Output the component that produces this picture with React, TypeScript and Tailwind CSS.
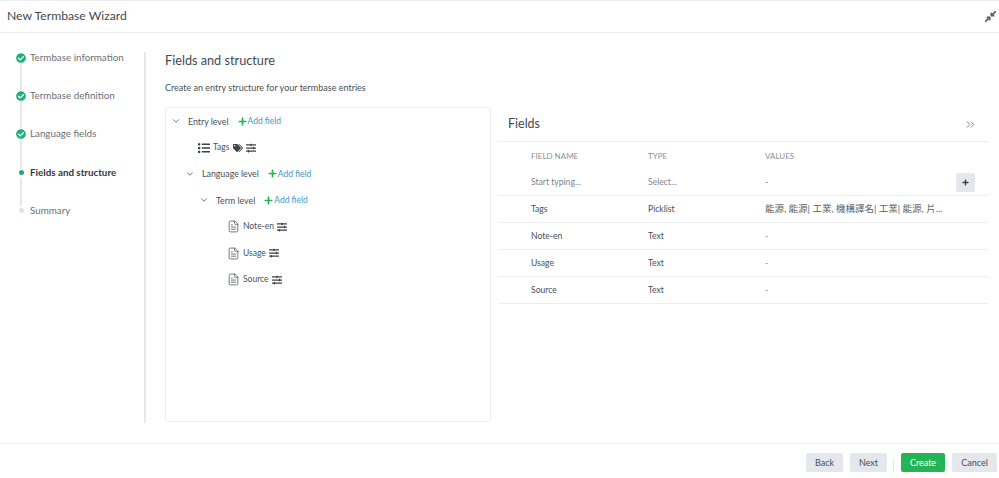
import React from 'react';
import { ChevronDown, ChevronsRight, FileText } from 'lucide-react';
import { FaCheckCircle, FaCompressAlt, FaList, FaPlus, FaSlidersH, FaTags } from 'react-icons/fa';

const steps = [
  { label: 'Termbase information', state: 'done' },
  { label: 'Termbase definition', state: 'done' },
  { label: 'Language fields', state: 'done' },
  { label: 'Fields and structure', state: 'active' },
  { label: 'Summary', state: 'todo' },
];

const rows = [
  { name: 'Tags', type: 'Picklist', values: '能源, 能源| 工業, 機構譯名| 工業| 能源, 片...' },
  { name: 'Note-en', type: 'Text', values: '-' },
  { name: 'Usage', type: 'Text', values: '-' },
  { name: 'Source', type: 'Text', values: '-' },
];

const AddField = () => (
  <span className="flex items-center text-[8.5px] text-[#3f97c4]">
    <FaPlus className="mr-[1px] h-[9px] w-[9px] text-[#22b455]" />
    Add field
  </span>
);

const Level = ({ label, indent }: { label: string; indent: string }) => (
  <div className={`flex h-[26.4px] items-center ${indent}`}>
    <ChevronDown className="h-[10px] w-[10px] text-[#555b63]" />
    <span className="ml-[7px] mr-[9px] text-[8.8px] text-[#4a4f55]">{label}</span>
    <AddField />
  </div>
);

const Leaf = ({ label }: { label: string }) => (
  <div className="flex h-[26.4px] items-center pl-[61px]">
    <FileText className="h-[13px] w-[13px] text-[#555b63]" strokeWidth={1.5} />
    <span className="ml-[3px] mr-[3px] text-[8.5px] text-[#4a4f55]">{label}</span>
    <FaSlidersH className="h-[10px] w-[10px] text-[#3c4248]" />
  </div>
);

export default function App() {
  return (
    <div className="flex h-[478px] w-[999px] flex-col overflow-hidden bg-white font-['Lato','Noto_Sans_CJK_TC',sans-serif]">
      <header className="flex h-[33px] shrink-0 items-center justify-between border-b border-t border-[#eceef0] pl-[7px] pr-[2px]">
        <h1 className="text-[12.2px] text-[#44494f]">New Termbase Wizard</h1>
        <FaCompressAlt className="h-[13px] w-[13px] text-[#5a6068]" />
      </header>

      <div className="flex min-h-0 flex-1 pt-[19px]">
        <aside className="h-[371px] w-[146px] shrink-0 border-r-2 border-[#e6e8ea] pt-[1px]">
          {steps.map((step, i) => (
            <div key={step.label} className="flex h-[38.2px] pl-[16px]">
              <div className="flex w-[10px] flex-col items-center">
                <div className="flex h-[10px] w-[10px] shrink-0 items-center justify-center">
                  {step.state === 'done' && <FaCheckCircle className="h-[10px] w-[10px] text-[#22b07a]" />}
                  {step.state === 'active' && <span className="h-[5px] w-[5px] rounded-full bg-[#1fa97a]" />}
                  {step.state === 'todo' && <span className="h-[5px] w-[5px] rounded-full bg-[#dfe2e5]" />}
                </div>
                {i < steps.length - 1 && <div className="w-[2px] flex-1 bg-[#e6e8ea]" />}
              </div>
              <span
                className={
                  step.state === 'active'
                    ? 'ml-[4px] text-[9.8px] leading-[9px] font-bold text-[#33383d]'
                    : 'ml-[4px] text-[9.8px] leading-[9px] text-[#6a7076]'
                }
              >
                {step.label}
              </span>
            </div>
          ))}
        </aside>

        <main className="min-w-0 flex-1 pl-[19px] pr-[11px]">
          <h2 className="text-[12.7px] leading-[17px] text-[#44494f]">Fields and structure</h2>
          <p className="mt-[13px] text-[9px] leading-[12px] text-[#4a4f55]">
            Create an entry structure for your termbase entries
          </p>

          <div className="mt-[13px] flex gap-[7px]">
            <section className="h-[315px] w-[326px] shrink-0 rounded-[3px] border border-[#eceef0]">
              <Level label="Entry level" indent="pl-[5px]" />
              <div className="flex h-[26.4px] items-center pl-[32px]">
                <FaList className="h-[12px] w-[12px] text-[#3c4248]" />
                <span className="ml-[3px] mr-[4px] text-[8.5px] text-[#4a4f55]">Tags</span>
                <FaTags className="mr-[3px] h-[10px] w-[10px] text-[#3c4248]" />
                <FaSlidersH className="h-[10px] w-[10px] text-[#3c4248]" />
              </div>
              <Level label="Language level" indent="pl-[19px]" />
              <Level label="Term level" indent="pl-[33px]" />
              <Leaf label="Note-en" />
              <Leaf label="Usage" />
              <Leaf label="Source" />
            </section>

            <section className="min-w-0 flex-1">
              <div className="flex h-[35px] items-center justify-between border-b border-[#eceef0] pl-[10px] pr-[11px]">
                <h3 className="text-[12.5px] text-[#44494f]">Fields</h3>
                <ChevronsRight className="h-[13px] w-[13px] text-[#5a6068]" strokeWidth={1.5} />
              </div>
              <div className="flex h-[27px] items-center pl-[33px] text-[8px] text-[#8a8f95]">
                <span className="w-[117px]">FIELD NAME</span>
                <span className="w-[117px]">TYPE</span>
                <span>VALUES</span>
              </div>
              <div className="flex h-[27px] items-center border-b border-[#eceef0] pl-[33px] pr-[13px] text-[8.6px] text-[#80858b]">
                <span className="w-[117px]">Start typing...</span>
                <span className="w-[117px]">Select...</span>
                <span className="flex-1">-</span>
                <button className="flex h-[19px] w-[19px] items-center justify-center rounded-[2px] bg-[#e4e7eb]">
                  <FaPlus className="h-[7px] w-[7px] text-[#3a4047]" />
                </button>
              </div>
              {rows.map((row) => (
                <div key={row.name} className="flex h-[27px] items-center border-b border-[#eceef0] pl-[33px] text-[8.6px] text-[#4a4f55]">
                  <span className="w-[117px]">{row.name}</span>
                  <span className="w-[117px]">{row.type}</span>
                  <span className={row.values === '-' ? 'text-[#8a8f95]' : 'text-[9.5px] text-[#5a5f65]'}>{row.values}</span>
                </div>
              ))}
            </section>
          </div>
        </main>
      </div>

      <footer className="flex h-[35px] shrink-0 items-start justify-end gap-[7px] border-t border-[#eceef0] pr-[2px] pt-[9px] text-[9px]">
        <button className="h-[19px] w-[37px] rounded-[2px] bg-[#e4e7eb] text-[#4a4f55]">Back</button>
        <button className="h-[19px] w-[37px] rounded-[2px] bg-[#e4e7eb] text-[#4a4f55]">Next</button>
        <div className="-ml-px h-[13px] w-px self-center bg-[#e4e6e9]" />
        <button className="h-[19px] w-[44px] rounded-[2px] bg-[#22b455] text-white">Create</button>
        <button className="h-[19px] w-[45px] rounded-[2px] bg-[#e4e7eb] text-[#4a4f55]">Cancel</button>
      </footer>
    </div>
  );
}
